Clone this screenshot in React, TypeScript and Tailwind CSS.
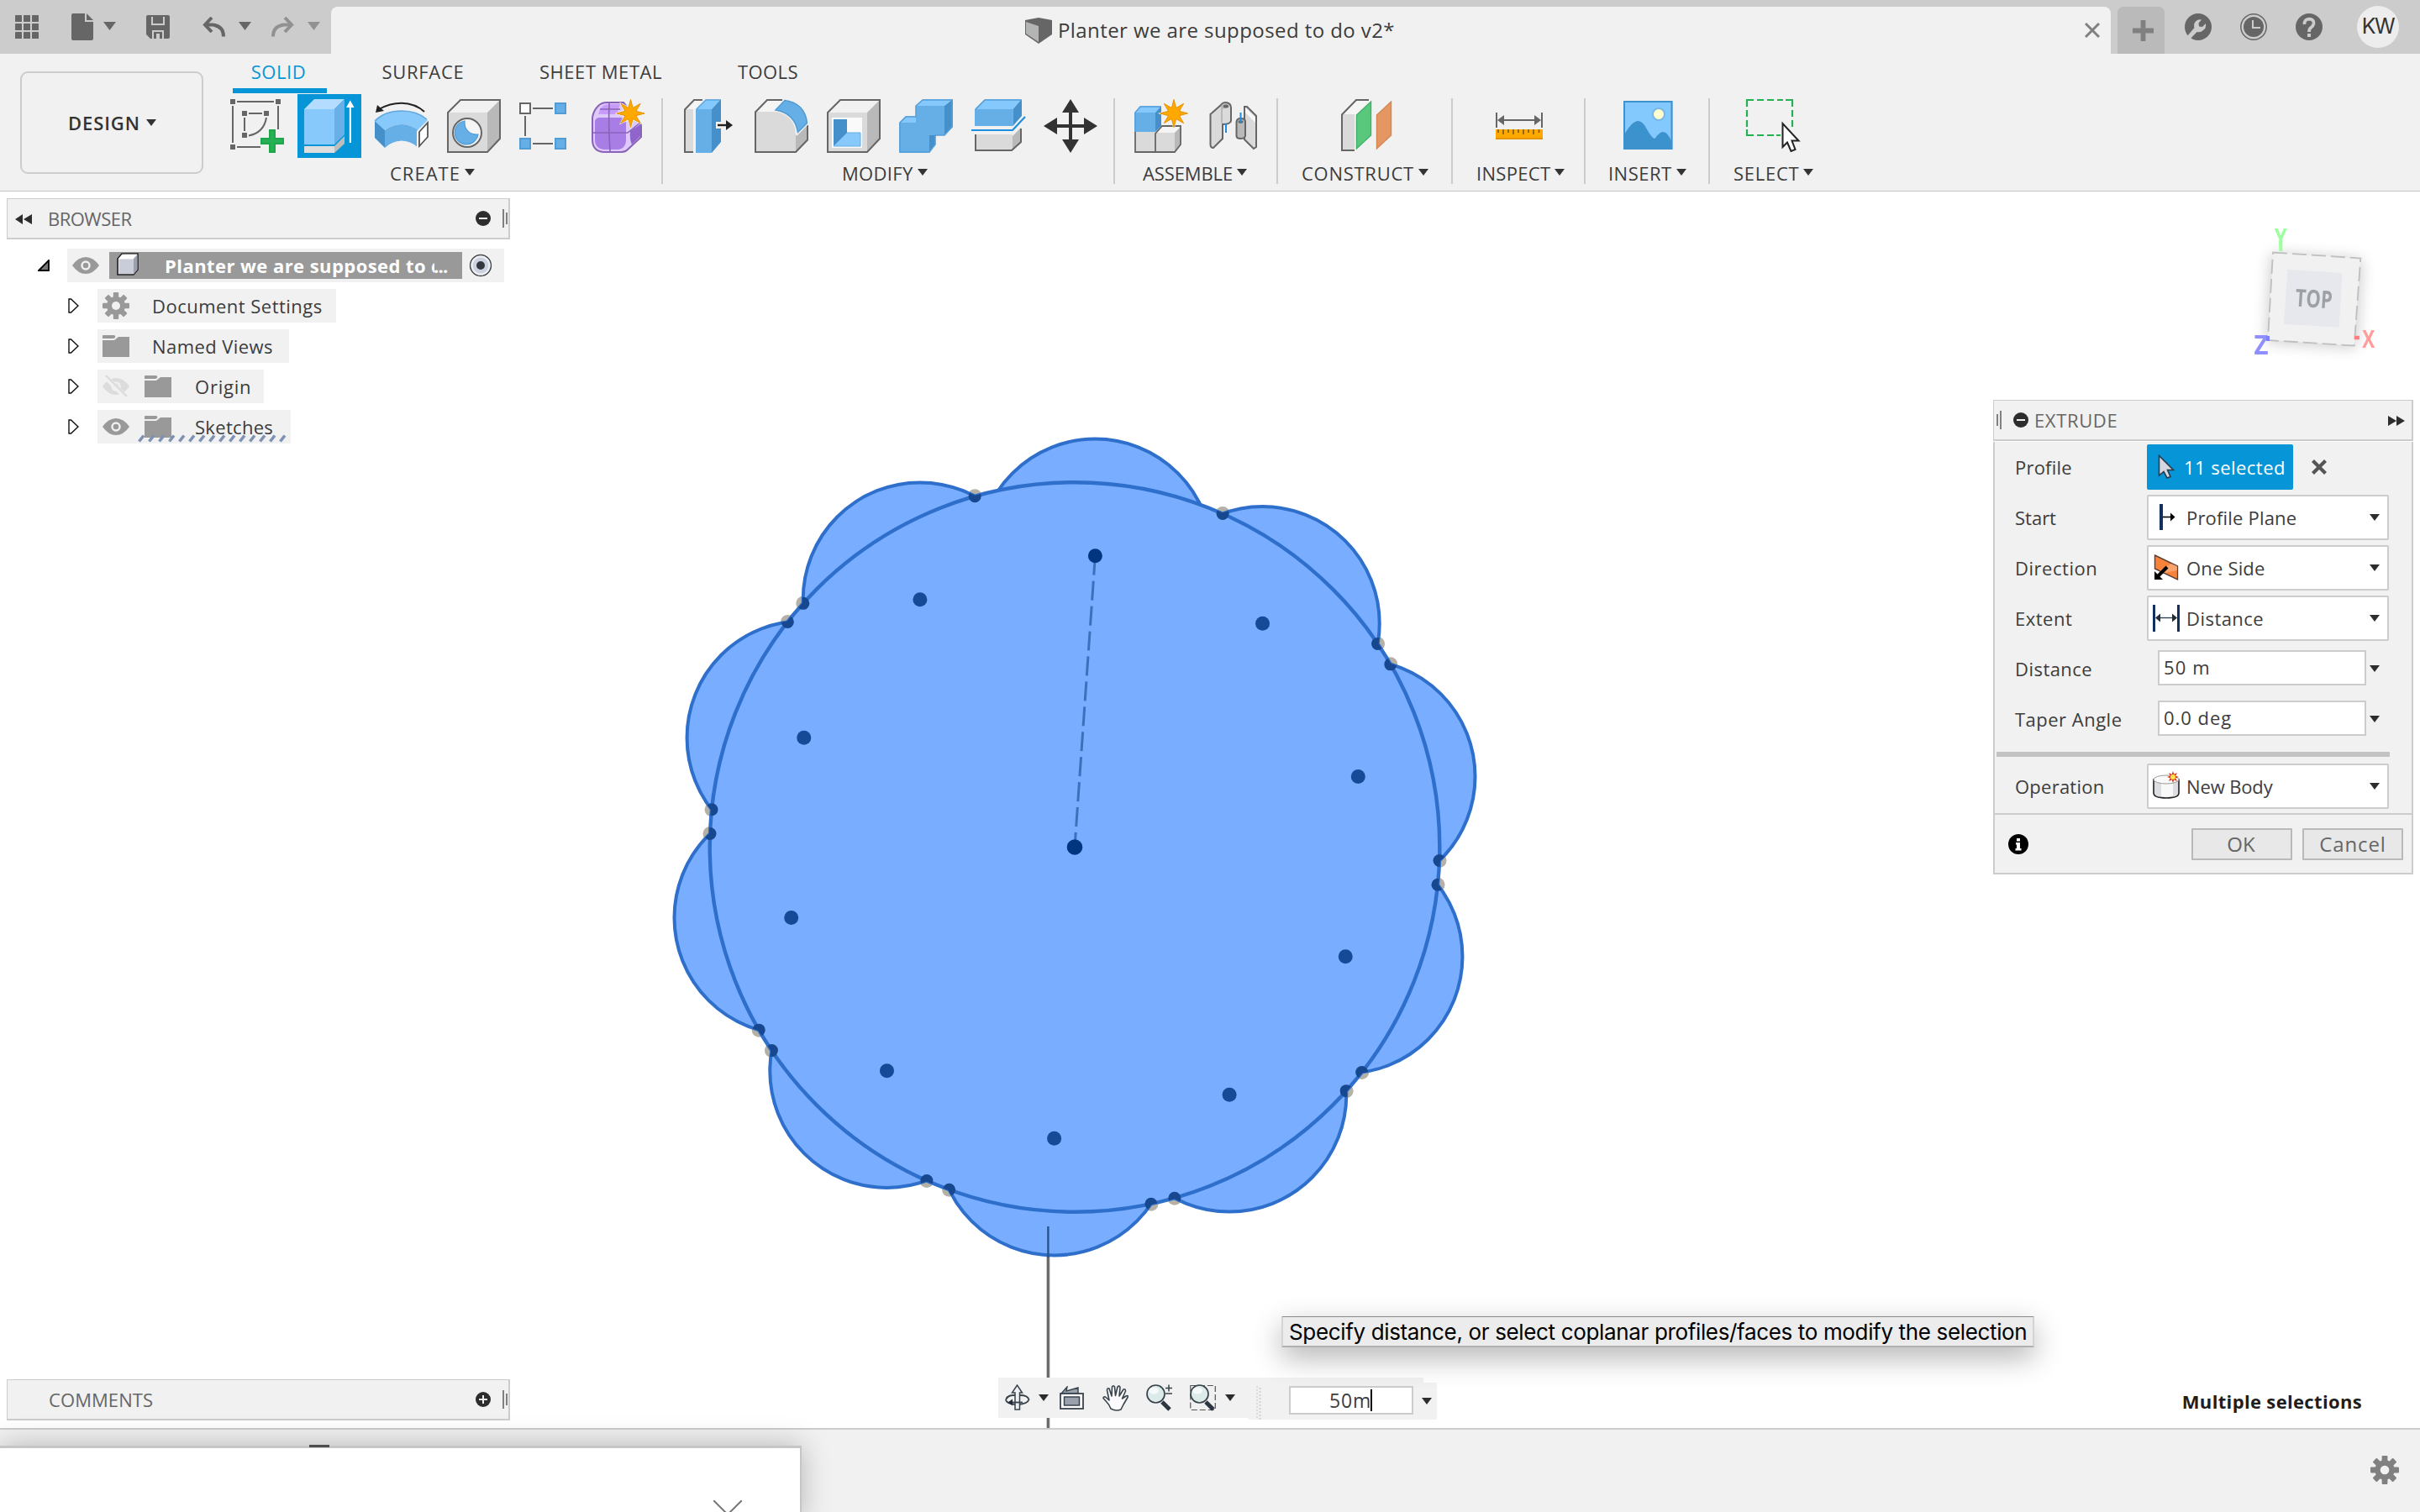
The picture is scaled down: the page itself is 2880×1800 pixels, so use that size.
import React from 'react';

type Kids = { children?: React.ReactNode };

function Caret({ className = 'w-3 h-2 text-[#333]' }: { className?: string }) {
  return (
    <svg viewBox="0 0 12 8" preserveAspectRatio="none" className={`shrink-0 ${className}`}>
      <path d="M0 0H12L6 8Z" fill="currentColor" />
    </svg>
  );
}

function Icon({ children }: Kids) {
  return (
    <svg viewBox="0 0 64 64" className="w-16 h-16 shrink-0 overflow-visible" strokeLinejoin="miter">
      {children}
    </svg>
  );
}

function starPoints(cx: number, cy: number, outer: number, inner: number, n: number) {
  return Array.from({ length: n * 2 }, (_, i) => {
    const r = i % 2 ? inner : outer;
    const a = (i * Math.PI) / n - Math.PI / 2;
    return `${(cx + r * Math.cos(a)).toFixed(2)},${(cy + r * Math.sin(a)).toFixed(2)}`;
  }).join(' ');
}

function Star({ cx, cy }: { cx: number; cy: number }) {
  return (
    <g>
      <polygon points={starPoints(cx, cy, 19, 9.5, 8)} fill="#f1f1f1" />
      <polygon points={starPoints(cx, cy, 16.5, 7, 8)} fill="#ffa800" stroke="#e59400" strokeWidth="1" />
    </g>
  );
}

/* ---------- Ribbon icons ---------- */

const SketchIcon = () => (
  <Icon>
    <g fill="#666">
      <rect x="0" y="0" width="6" height="6" /><rect x="54" y="0" width="6" height="6" />
      <rect x="14" y="14" width="6" height="6" /><rect x="40" y="14" width="6" height="6" />
      <rect x="14" y="40" width="6" height="6" /><rect x="0" y="54" width="6" height="6" />
    </g>
    <path d="M8 3H52M3 8V52M57 8V36M8 57H36M22 17H38M17 22V38M43 22Q40 40 22 43.5" fill="none" stroke="#666" strokeWidth="2" />
    <path d="M46 36H54V46H64V54H54V64H46V54H36V46H46Z" fill="#26b054" />
    <path d="M47 37H53V47H63V53H53V63H47V53H37V47H47Z" fill="none" stroke="#1ea34a" strokeWidth="1.6" />
  </Icon>
);

const ExtrudeIcon = () => (
  <div className="-mx-1.5 -my-1.5 w-[76px] h-[76px] bg-[#0696d7] shrink-0">
    <svg viewBox="0 0 76 76" className="w-full h-full">
      <path d="M8 62H44V70H8Z" fill="#dedede" />
      <path d="M44 62L56 50V59L44 70Z" fill="#bdbdbd" />
      <path d="M8 18H44V60H8Z" fill="#87c9fb" />
      <path d="M8 18L20 6H56L44 18Z" fill="#b3dcff" />
      <path d="M44 18L56 6V48L44 60Z" fill="#6ab0e8" />
      <path d="M62.8 58V16" stroke="#fff" strokeWidth="2" />
      <path d="M58 16L62.8 7.5L67.6 16Z" fill="#fff" />
    </svg>
  </div>
);

const RevolveIcon = () => (
  <Icon>
    <path d="M5 12Q18 4.700 32 4.700Q48 5 59 15" fill="none" stroke="#222" strokeWidth="2" />
    <path d="M1 16L3 7L11 14Z" fill="#222" />
    <path d="M0 26Q12 14 32 14Q52 14 64 26L52 37Q42 30 32 30Q22 30 12 37Z" fill="#87c9fb" />
    <path d="M12 37Q22 30 32 30Q42 30 52 37V58Q44 50 32 49.500Q20 50 12 58Z" fill="#65aee6" />
    <path d="M0 26L12 37V58L0 46Z" fill="#4590cb" />
    <path d="M0 26Q12 14 32 14Q50 14 62 24" fill="none" stroke="#5fa8e0" strokeWidth="1.500" />
    <path d="M50 38L64 24V47L50 60Z" fill="#f1f1f1" />
    <path d="M53 39L63 28V45L53 56Z" fill="#fff" stroke="#555" strokeWidth="1.800" />
  </Icon>
);

const GrayCube = () => (
  <g>
    <path d="M1 16L16 1H63L48 16Z" fill="#f1f1f1" />
    <path d="M1 16H48V63H1Z" fill="#dadada" />
    <path d="M48 16L63 1V47L48 63Z" fill="#b9b9b9" />
    <path d="M1 16L16 1H63V47L48 63H1Z" fill="none" stroke="#666" strokeWidth="2" />
  </g>
);

const HoleIcon = () => (
  <Icon>
    <GrayCube />
    <circle cx="24" cy="40" r="17" fill="#f5f5f5" stroke="#666" strokeWidth="2" />
    <path d="M21 26A14 14 0 1 0 37 42C27 43 20 36 21 26Z" fill="#65aee6" stroke="#4f9bd6" strokeWidth="1.200" />
  </Icon>
);

const PatternIcon = () => (
  <Icon>
    <path d="M16 11H40M7 20V44M16 53H40" stroke="#666" strokeWidth="2" />
    <rect x="1" y="5" width="12" height="12" fill="#fff" stroke="#666" strokeWidth="2" />
    <g fill="#65aee6" stroke="#529cd4" strokeWidth="2">
      <rect x="43" y="5" width="12" height="12" />
      <rect x="1" y="47" width="12" height="12" />
      <rect x="43" y="47" width="12" height="12" />
    </g>
  </Icon>
);

const FormIcon = () => (
  <Icon>
    <path d="M1 22Q2 14 8 8Q12 4 18 4H38L59 30V45L43 60Q40 63 36 63H14Q1 62 1 48Z" fill="#dec9fb" stroke="#8a63b8" strokeWidth="2" />
    <path d="M10 12Q14 6 20 6H34L30 18H8Z" fill="#c79bfa" />
    <path d="M4 26Q5 22 10 22H34Q40 22 41 28V50Q40 59 32 60H15Q4 59 4 48Z" fill="#a97de6" />
    <path d="M46 38L58 30V44L48 54Q45 48 46 38Z" fill="#8f65cc" />
    <path d="M21 5Q20 32 22 62M2 40H43L58 28M10 12H34" fill="none" stroke="#8a63b8" strokeWidth="1.600" />
    <Star cx={46.5} cy={17} />
  </Icon>
);

const PressPullIcon = () => (
  <Icon>
    <path d="M2 12L14 1H24L14 12V63H2Z" fill="#f5f5f5" />
    <path d="M3 12H13V62H3Z" fill="#dadada" />
    <path d="M24 1H14L3 12.500V63H13" fill="none" stroke="#666" strokeWidth="2" />
    <path d="M16 12H35V64H16Z" fill="#65aee6" />
    <path d="M16 12L28 0H46L35 12Z" fill="#85c8fb" />
    <path d="M35 12L46 0V51L35 64Z" fill="#4590cb" />
    <path d="M17 12L28 1H45" fill="none" stroke="#5fa8e0" strokeWidth="1.500" />
    <path d="M40 27H50V22L63 31L50 40V35H40Z" fill="#f1f1f1" />
    <path d="M42 31H53" stroke="#222" strokeWidth="2.400" />
    <path d="M52 25L60 31L52 37Z" fill="#222" />
  </Icon>
);

const FilletIcon = () => (
  <Icon>
    <path d="M1 15L15 1H36L24 15Z" fill="#f5f5f5" />
    <path d="M1 15H24Q48 18 49 43V63H1Z" fill="#dadada" />
    <path d="M49 43L63 30V48L49 63Z" fill="#b9b9b9" />
    <path d="M33 1H15L1 15.500V63H49L63 48.500V31" fill="none" stroke="#666" strokeWidth="2" />
    <path d="M22 14.500L35 0Q62 3 65 29L50 44Q48 17 22 14.500Z" fill="#f1f1f1" />
    <path d="M25 13L36 1.500Q60 5 62.500 28.500L51.500 39.500Q48 17 25 13Z" fill="#65aee6" stroke="#4f9bd6" strokeWidth="1.500" />
  </Icon>
);

const ShellIcon = () => (
  <Icon>
    <GrayCube />
    <path d="M6 22H42V58H6Z" fill="#fafafa" />
    <path d="M8 24H24V40L8 56Z" fill="#4590cb" />
    <path d="M24 40H40V56H8Z" fill="#87c9fb" stroke="#65aee6" strokeWidth="1" />
  </Icon>
);

const CombineIcon = () => (
  <Icon>
    <path d="M0 28H20V8H54V43H36V64H0Z" fill="#65aee6" />
    <path d="M0 28L8 20H20V28Z M20 8L28 0H64L54 8Z" fill="#85c8fb" />
    <path d="M54 8L64 0V33L54 43Z M36 43H43V54L36 64Z" fill="#4590cb" />
    <path d="M1 63V28L8 21H20V8L28 1H63V33L54 43H43V54L36 63Z" fill="none" stroke="#559fd8" strokeWidth="1.600" />
  </Icon>
);

const SplitIcon = () => (
  <Icon>
    <path d="M4 12H49.500V32H4Z" fill="#65aee6" />
    <path d="M4 12L16 0H60L49.500 12Z" fill="#85c8fb" />
    <path d="M49.500 12L60 0V20L49.500 32Z" fill="#4590cb" />
    <path d="M5 12L16 1H59" fill="none" stroke="#559fd8" strokeWidth="1.600" />
    <path d="M0 37H49L64 21" fill="none" stroke="#1c8ee0" strokeWidth="2.200" />
    <path d="M5 42H49V61H5Z" fill="#dadada" />
    <path d="M49 44L59 34V52L49 61Z" fill="#b9b9b9" />
    <path d="M5 42V61H48L59 51V35" fill="none" stroke="#666" strokeWidth="2" />
  </Icon>
);

const MoveIcon = () => (
  <Icon>
    <path d="M32 0L42 16H34V30H48V22L64 32L48 42V34H34V48H42L32 64L22 48H30V34H16V42L0 32L16 22V30H30V16H22Z" fill="#333" />
  </Icon>
);

const ComponentIcon = () => (
  <Icon>
    <path d="M1 39H25V63H1Z M25 40H48V63H25Z" fill="#dadada" />
    <path d="M25 40L32 32H56L48 40Z" fill="#f5f5f5" />
    <path d="M48 40L56 32V54L48 63Z" fill="#b9b9b9" />
    <path d="M1 39V63H48L55 54V32H33L25 41V63" fill="none" stroke="#666" strokeWidth="1.800" />
    <path d="M0 16H25V39H0Z" fill="#65aee6" />
    <path d="M0 16L7 8H32L25 16Z" fill="#85c8fb" />
    <path d="M25 16L32 8V32L25 39Z" fill="#4590cb" />
    <path d="M1 39V16L7 9H31" fill="none" stroke="#559fd8" strokeWidth="1.400" />
    <Star cx={47} cy={17} />
  </Icon>
);

const JointIcon = () => (
  <Icon>
    <path d="M4.500 18L17 7Q19 4 23 4Q29 5 29 10V26Q28 30 19 30V47L8 58Q4.500 58 4.500 54Z" fill="#dadada" stroke="#666" strokeWidth="2" />
    <path d="M17 28V8Q20 4 24 5V10L19 12V29Z" fill="#b9b9b9" />
    <ellipse cx="23" cy="8.500" rx="3.200" ry="2" fill="#666" />
    <path d="M23 29V40" stroke="#1c8ee0" strokeWidth="2" />
    <path d="M45 9L48 9L59 20V57L56 59L45 48Z" fill="#dadada" stroke="#666" strokeWidth="2" />
    <path d="M46 10L58 22V28L46 16Z" fill="#f8f8f8" />
    <path d="M35.500 27Q36 23 40.500 23Q46 23 46 27V44Q45 47 40.500 47Q36 47 35.500 44Z" fill="#b9b9b9" stroke="#666" strokeWidth="2" />
    <ellipse cx="40.500" cy="27" rx="3" ry="1.800" fill="#666" />
    <path d="M40.500 16V28" stroke="#1c8ee0" strokeWidth="2" />
  </Icon>
);

const ConstructIcon = () => (
  <Icon>
    <path d="M3 18L20 1H36L20 18Z" fill="#f5f5f5" />
    <path d="M3 18H18V61H3Z" fill="#dadada" />
    <path d="M35 1H20L3 18.500V61H18" fill="none" stroke="#666" strokeWidth="2" />
    <path d="M20.500 19L37.500 3V43L20.500 59Z" fill="#59c87d" stroke="#43b269" strokeWidth="1.400" />
    <path d="M44.500 19L61.500 3V43L44.500 59Z" fill="#e59763" stroke="#d58550" strokeWidth="1.400" />
  </Icon>
);

const MeasureIcon = () => (
  <Icon>
    <path d="M5 16V34M59 16V34M10 25H54" stroke="#666" strokeWidth="2" />
    <path d="M6 25L14 19V31ZM58 25L50 19V31Z" fill="#666" />
    <rect x="4" y="36" width="56" height="12" fill="#ffa800" />
    <path d="M4 47H60" stroke="#e59400" strokeWidth="2" />
    <path d="M7 36V40M13 36V42M19 36V40M25 36V42M31 36V40M37 36V42M43 36V40M49 36V42M55.500 36V40" stroke="#7a5a1c" strokeWidth="1.600" />
  </Icon>
);

const InsertIcon = () => (
  <Icon>
    <rect x="3" y="2" width="58.500" height="58" fill="#84c9fe" />
    <path d="M3 44Q13 26 20.500 26Q26 26 31 36Q38 48 40.500 47Q46 39 50 39Q56 39 61 52V60H3Z" fill="#3c92cd" />
    <rect x="4" y="3" width="56.500" height="56" fill="none" stroke="#3c92cd" strokeWidth="2" />
    <circle cx="45" cy="18" r="7" fill="#ffffcf" stroke="#78b8e2" strokeWidth="2" />
  </Icon>
);

const SelectIcon = () => (
  <Icon>
    <path d="M1 9V1H9M13 1H21M25 1H33M37 1H44M47 1H55V9M55 13V21M55 25V33M1 13V21M1 25V33M1 36V43H9M13 43H21M25 43H33M36 43H41" fill="none" stroke="#26b054" strokeWidth="2.200" />
    <path d="M43.500 29V57L49 51.500L53.500 62L58.500 60L54.500 49.500H62.500Z" fill="#fff" stroke="#222" strokeWidth="2" />
  </Icon>
);

/* ---------- Header ---------- */

const Grid9 = () => (
  <svg viewBox="0 0 28 28" className="w-7 h-7" fill="#666">
    {[0, 10, 20].map((y) => [0, 10, 20].map((x) => <rect key={`${x}-${y}`} x={x} y={y} width="8" height="8" rx="0.600" />))}
  </svg>
);

function Header() {
  return (
    <header className="flex h-16 shrink-0 bg-[#ccc]">
      <div className="flex w-[394px] items-center pl-[18px]">
        <Grid9 />
        <svg viewBox="0 0 26 32" className="ml-[39px] w-[26px] h-8" fill="#666">
          <path d="M2 0H16V10H26V30Q26 32 24 32H2Q0 32 0 30V2Q0 0 2 0Z M18 0L26 8H18Z" />
        </svg>
        <Caret className="ml-3 w-[15px] h-[10px] -mt-0.5 text-[#666]" />
        <svg viewBox="0 0 28 28" className="ml-9 w-7 h-7">
          <path d="M2 0H26Q28 0 28 2V26Q28 28 26 28H5L0 23V2Q0 0 2 0Z" fill="#666" />
          <path d="M7 2V11H21V2M8 28V19H20V28" fill="none" stroke="#ccc" strokeWidth="2" />
          <path d="M12 22H16V28H12Z" fill="#ccc" />
        </svg>
        <svg viewBox="0 0 27 24" className="ml-[39px] w-[27px] h-6" fill="none" stroke="#666" strokeWidth="4">
          <path d="M11 1L3 9.500L11 18" /><path d="M3 9.500H12Q25 11 25 23.500" />
        </svg>
        <Caret className="ml-4 w-[15px] h-[10px] -mt-0.5 text-[#666]" />
        <svg viewBox="0 0 27 24" className="ml-6 w-[27px] h-6" fill="none" stroke="#919191" strokeWidth="4">
          <path d="M16 1L24 9.500L16 18" /><path d="M24 9.500H15Q2 11 2 23.500" />
        </svg>
        <Caret className="ml-4 w-[15px] h-[10px] -mt-0.5 text-[#919191]" />
      </div>
      <div className="mt-2 flex w-[2118px] items-center rounded-t-[8px] bg-[#f1f1f1] pl-[826px]">
        <svg viewBox="0 0 32 32" className="w-8 h-8">
          <path d="M0 4L16 1L32 4V21L16 32L0 21Z" fill="#666" />
          <path d="M1 6L16 11V30L1 20Z" fill="#b3b5b4" />
        </svg>
        <span className="ml-[7px] -mt-px text-[24px] leading-[32px] tracking-[0.42px] whitespace-nowrap text-[#3c3c3c]">
          Planter we are supposed to do v2*
        </span>
        <svg viewBox="0 0 18 18" className="ml-auto mr-[13px] w-[18px] h-[18px]" stroke="#808080" strokeWidth="3">
          <path d="M1 1L17 17M17 1L1 17" />
        </svg>
      </div>
      <div className="ml-2 mt-2 flex w-14 items-center justify-center rounded-t-[7px] bg-[#bababa]">
        <svg viewBox="0 0 26 26" className="ml-1 w-[25px] h-[25px]" stroke="#808080" strokeWidth="6">
          <path d="M0 13H26M13 0V26" />
        </svg>
      </div>
      <div className="flex flex-1 items-center pl-6">
        <svg viewBox="0 0 32 32" className="w-8 h-8">
          <circle cx="16" cy="16" r="16" fill="#666" />
          <path d="M3 27L11.500 17Q10 12 13.500 9Q16 6.500 20 7.500L16.500 11.500L17 15.500L21 16L25 12Q26 17 22 20Q19 23 14.500 22L6 31Z" fill="#ccc" />
        </svg>
        <svg viewBox="0 0 32 32" className="ml-[34px] w-8 h-8">
          <circle cx="16" cy="16" r="15.200" fill="none" stroke="#666" strokeWidth="1.500" />
          <circle cx="16" cy="16" r="12" fill="#666" />
          <path d="M15 8V17H24" fill="none" stroke="#ccc" strokeWidth="2" />
        </svg>
        <svg viewBox="0 0 32 32" className="ml-[34px] w-8 h-8">
          <circle cx="16" cy="16" r="16" fill="#666" />
          <path d="M10.500 13Q10 7 16 6.700Q22 7 21.500 12Q21 15 18 17Q16 18.500 16 22" fill="none" stroke="#ccc" strokeWidth="3.800" />
          <rect x="14" y="24" width="4" height="4" fill="#ccc" />
        </svg>
        <div className="ml-[41px] flex h-[50px] w-[50px] items-center justify-center rounded-full bg-[#ededed] font-['Inter',sans-serif] text-[25px] tracking-[-1.4px] text-[#333]">
          KW
        </div>
      </div>
    </header>
  );
}

/* ---------- Ribbon ---------- */

function Group({ width, pad, label, labelPad, children }: { width: string; pad: string; label: React.ReactNode; labelPad: string } & Kids) {
  return (
    <section className={`h-[102px] shrink-0 ${width}`}>
      <div className={`flex gap-[22px] pt-px ${pad}`}>{children}</div>
      <div className={`mt-[13px] flex h-[22px] items-center text-[22px] leading-[22px] ${labelPad}`}>
        {label}
        <Caret className="ml-[5px] -mt-0.5 w-3 h-2 text-[#333]" />
      </div>
    </section>
  );
}

function Ribbon() {
  return (
    <div className="flex h-[164px] shrink-0 border-b border-[#c4c4c4] bg-[#f1f1f1] whitespace-nowrap">
      <div className="w-[242px] pl-6 pt-[21px]">
        <button className="flex h-[122px] w-[218px] items-center rounded-[9px] border-2 border-[#ccc] pl-[55px] pb-px text-[22px] leading-[24px] font-semibold tracking-[0.9px] text-[#333]">
          DESIGN
          <Caret className="ml-[7px] w-3 h-2 text-[#333]" />
        </button>
      </div>
      <div className="flex-1">
        <nav className="flex h-12 pl-[35px] text-[22px]">
          <div className="flex h-[47px] w-[112px] justify-center border-b-[6px] border-[#0696d7] pr-[3px] pt-[10px] leading-[22px] tracking-[0.55px] text-[#0696d7]">SOLID</div>
          <div className="ml-[43px] w-[143px] pt-[10px] text-center leading-[22px] tracking-[0.7px]">SURFACE</div>
          <div className="ml-[44px] w-[192px] pt-[10px] text-center leading-[22px] tracking-[0.54px]">SHEET METAL</div>
          <div className="ml-[43px] w-[120px] pt-[10px] text-center leading-[22px] tracking-[0.42px]">TOOLS</div>
        </nav>
        <div className="flex pt-[5px]">
          <Group width="w-[547px] border-r-2 border-[#ccc]" pad="pl-8" labelPad="pl-[222px]" label={<span className="tracking-[1px]">CREATE</span>}>
            <SketchIcon /><ExtrudeIcon /><RevolveIcon /><HoleIcon /><PatternIcon /><FormIcon />
          </Group>
          <Group width="w-[538px] border-r-2 border-[#ccc]" pad="pl-[23px]" labelPad="pl-[213px]" label={<span className="tracking-[0.33px]">MODIFY</span>}>
            <PressPullIcon /><FilletIcon /><ShellIcon /><CombineIcon /><SplitIcon /><MoveIcon />
          </Group>
          <Group width="w-[194px] border-r-2 border-[#ccc]" pad="pl-[23px]" labelPad="pl-[33px]" label={<span className="tracking-[-0.11px]">ASSEMBLE</span>}>
            <ComponentIcon /><JointIcon />
          </Group>
          <Group width="w-[208px] border-r-2 border-[#ccc]" pad="pl-[73px]" labelPad="pl-[28px]" label={<span className="tracking-[0.73px]">CONSTRUCT</span>}>
            <ConstructIcon />
          </Group>
          <Group width="w-[158px] border-r-2 border-[#ccc]" pad="pl-[47px]" labelPad="pl-[28px]" label={<span className="tracking-[0.32px]">INSPECT</span>}>
            <MeasureIcon />
          </Group>
          <Group width="w-[148px] border-r-2 border-[#ccc]" pad="pl-[42px]" labelPad="pl-[27px]" label={<span className="tracking-[0.48px]">INSERT</span>}>
            <InsertIcon />
          </Group>
          <Group width="w-[160px]" pad="pl-[43px]" labelPad="pl-[28px]" label={<span className="tracking-[0.73px]">SELECT</span>}>
            <SelectIcon />
          </Group>
        </div>
      </div>
    </div>
  );
}

/* ---------- Sketch on the canvas ---------- */

const CX = 1279;
const CY = 1008.5;
const R = 434.3;
const PETAL_DIST = 347.6;
const PETAL_R = 139.2;
const HALF_SPAN = 16.1;
const BASE = 4.02;

const polar = (deg: number, r: number) => {
  const a = (deg * Math.PI) / 180;
  return { x: CX + r * Math.sin(a), y: CY - r * Math.cos(a) };
};
const petals = Array.from({ length: 10 }, (_, i) => BASE + i * 36);
const joints = petals.slice(1).flatMap((a) => [polar(a - HALF_SPAN, R), polar(a + HALF_SPAN, R)]);

function Viewport() {
  const top = polar(BASE, PETAL_DIST);
  return (
    <svg viewBox="0 228 2880 1472" className="absolute inset-0 h-[1472px] w-[2880px]">
      <defs>
        <filter id="cubeShadow" x="-40%" y="-40%" width="180%" height="180%"><feGaussianBlur stdDeviation="9" /></filter>
        <filter id="soft" x="-20%" y="-20%" width="140%" height="140%"><feGaussianBlur stdDeviation="0.7" /></filter>
        <clipPath id="shape">
          <circle cx={CX} cy={CY} r={R + 1} />
          {petals.map((a) => { const p = polar(a, PETAL_DIST); return <circle key={a} cx={p.x} cy={p.y} r={PETAL_R + 1} />; })}
        </clipPath>
      </defs>
      <path d="M1247.400 1490V1700" stroke="#c4c4c4" strokeWidth="4.600" />
      <path d="M1247.400 1490V1700" stroke="#636363" strokeWidth="2.600" />
      <g filter="url(#soft)">
        {joints.map((p, i) => <circle key={i} cx={p.x} cy={p.y} r="8.500" fill="#b5b1a6" />)}
      </g>
      {petals.map((a) => {
        const p = polar(a, PETAL_DIST);
        return <circle key={a} cx={p.x} cy={p.y} r={PETAL_R} fill="#79adff" stroke="#2e6fcb" strokeWidth="4" />;
      })}
      <circle cx={CX} cy={CY} r={R} fill="#79adff" stroke="#2e6fcb" strokeWidth="4.400" />
      <path d="M1247.400 1460V1497" stroke="#27528f" strokeWidth="2.400" />
      <path d={`M${top.x} ${top.y}L${CX} ${CY}`} stroke="#3d70bb" strokeWidth="3" strokeDasharray="23 7" />
      <g clipPath="url(#shape)" fill="#17488f">
        {joints.map((p, i) => <circle key={i} cx={p.x} cy={p.y} r="7.500" />)}
      </g>
      <g fill="#164a97">
        {petals.slice(1).map((a) => { const p = polar(a, PETAL_DIST); return <circle key={a} cx={p.x} cy={p.y} r="8.500" />; })}
      </g>
      <circle cx={top.x} cy={top.y} r="8.500" fill="#00357f" />
      <circle cx={CX} cy={CY} r="9.300" fill="#00357f" />

      {/* view cube */}
      <path d="M2703 302L2811 309L2804 414L2697 407Z" fill="#000" opacity="0.2" filter="url(#cubeShadow)" />
      <g filter="url(#soft)">
        <path d="M2705 300.500L2809.300 307.500L2801.700 411.500L2699 405Z" fill="#f1f1f1" stroke="#bfbfbf" strokeWidth="1.800" strokeDasharray="17 6" />
        <path d="M2722.300 320.700L2787.300 325L2783.700 389.700L2718 385.700Z" fill="#e6e8ed" />
        <g fontFamily="Open Sans, sans-serif">
          <text x="2753.700" y="366" textAnchor="middle" fontSize="29" fontWeight="700" fill="#9da1a7" textLength="44" lengthAdjust="spacingAndGlyphs" transform="rotate(4 2753.700 355.700)">TOP</text>
          <text x="2714.300" y="293" textAnchor="middle" fontSize="29" fontWeight="700" fill="#9dff9d" textLength="15" lengthAdjust="spacingAndGlyphs">Y</text>
          <text x="2818.700" y="413.500" textAnchor="middle" fontSize="29" fontWeight="700" fill="#ff9c9c" textLength="15" lengthAdjust="spacingAndGlyphs">X</text>
          <text x="2691" y="421.500" textAnchor="middle" fontSize="32" fontWeight="700" fill="#8f8fff" textLength="17" lengthAdjust="spacingAndGlyphs">Z</text>
        </g>
        <path d="M2714.300 286V299" stroke="#9dff9d" strokeWidth="4" />
        <path d="M2802 402H2808" stroke="#ff8080" strokeWidth="4.500" />
        <path d="M2699 400V406" stroke="#8080ff" strokeWidth="4" />
      </g>
    </svg>
  );
}

/* ---------- Browser ---------- */

const Eye = ({ hidden = false }: { hidden?: boolean }) => (
  <svg viewBox="0 0 32 28" className="h-7 w-8 shrink-0">
    <path d="M0 14Q7 4 16 4Q25 4 32 14Q25 24 16 24Q7 24 0 14Z" fill={hidden ? '#dcdcdc' : '#999'} />
    <circle cx="16" cy="14" r="4.500" fill={hidden ? '#dcdcdc' : 'none'} stroke="#f1f1f1" strokeWidth="2.400" />
    {hidden && <path d="M3 2L28 27" stroke="#f1f1f1" strokeWidth="6" />}
    {hidden && <path d="M4 1L29 26" stroke="#dcdcdc" strokeWidth="2.400" />}
  </svg>
);

const Folder = () => (
  <svg viewBox="0 0 32 26" className="h-[26px] w-8 shrink-0" fill="#999">
    <path d="M0 1Q0 0 1 0H14Q16 1 15 3L13 4H0Z M0 6H14L19 2H32V26H0Z" />
  </svg>
);

const Gear = ({ className }: { className: string }) => (
  <svg viewBox="0 0 32 32" className={`shrink-0 ${className}`}>
    <g fill="currentColor">
      {[0, 45, 90, 135].map((a) => <rect key={a} x="12.800" y="0" width="6.400" height="32" rx="1" transform={`rotate(${a} 16 16)`} />)}
      <circle cx="16" cy="16" r="11" />
    </g>
    <circle cx="16" cy="16" r="5" fill="#f1f1f1" />
  </svg>
);

const Expander = () => (
  <svg viewBox="0 0 13 18" className="h-[18px] w-[13px] shrink-0">
    <path d="M1 1H3.500L12 9L3.500 17H1Z" fill="#fff" stroke="#111" strokeWidth="1.400" />
  </svg>
);

function TreeRow({ width, children }: { width: string } & Kids) {
  return (
    <div className="flex h-12 items-center pl-[81px]">
      <Expander />
      <div className={`relative ml-[22px] flex h-10 items-center bg-[#f1f1f1] pl-1.5 text-[22px] leading-[24px] ${width}`}>{children}</div>
    </div>
  );
}

const RoundButton = ({ plus = false, className }: { plus?: boolean; className: string }) => (
  <svg viewBox="0 0 18 18" className={`h-[18px] w-[18px] shrink-0 ${className}`}>
    <circle cx="9" cy="9" r="9" fill="#2d2d2d" />
    <path d={plus ? 'M4 9H14M9 4V14' : 'M4 9H14'} stroke="#f1f1f1" strokeWidth="2" />
  </svg>
);

const Grip = () => (
  <div className="flex items-center gap-[2px]">
    <div className="h-[22px] w-[2px] bg-[#808080]" />
    <div className="h-[14px] w-[2px] bg-[#808080]" />
  </div>
);

function Browser() {
  return (
    <div className="pt-2">
      <div className="ml-2 flex h-[49px] w-[599px] items-center border border-r-2 border-b-2 border-[#ccc] bg-[#f1f1f1]">
        <svg viewBox="0 0 20 12" className="ml-[9px] mt-0.5 h-3 w-5" fill="#2d2d2d"><path d="M0 6L9 0V12ZM10 6L20 0V12Z" /></svg>
        <span className="ml-[19px] text-[22px] leading-[24px] tracking-[-0.52px] text-[#666]">BROWSER</span>
        <RoundButton className="ml-auto mr-[14px]" />
        <div className="mr-px"><Grip /></div>
      </div>
      <div className="mt-[11px] flex h-10 items-center pl-[45px]">
        <svg viewBox="0 0 14 14" className="h-[14px] w-[14px]"><path d="M13 1V13H1Z" fill="#777" stroke="#000" strokeWidth="1.800" /></svg>
        <div className="ml-[21px] flex h-10 w-[520px] items-center bg-[#f1f1f1] pl-1.5">
          <Eye />
          <div className="ml-3 flex h-8 w-[420px] items-center bg-[#999] pl-[9px]">
            <svg viewBox="0 0 26 27" className="-mt-1 h-[27px] w-[26px]">
              <path d="M1 26V7L6 1H25V20L20 26Z" fill="#dfe2ea" stroke="#222" strokeWidth="1.600" />
              <path d="M2 7H20L24.500 1.800H6.500Z" fill="#fff" />
              <path d="M20 7L24.500 2V20L20 25.500Z" fill="#9ba0ac" />
              <path d="M3 8H20V25H3Z" fill="#c9cdd9" />
            </svg>
            <div className="ml-[31px] flex text-[22px] leading-[24px] font-bold tracking-[0.44px] whitespace-nowrap text-white">
              <span className="w-[317px]">Planter we are supposed to</span>
              <span className="w-[4px] overflow-hidden">d</span>
              <span className="-ml-px tracking-[-0.8px]">...</span>
            </div>
          </div>
          <svg viewBox="0 0 28 28" className="ml-2 h-7 w-7">
            <circle cx="14" cy="14" r="12.400" fill="#ccd2e0" stroke="#444" strokeWidth="1.500" />
            <circle cx="14" cy="14" r="10.500" fill="none" stroke="#eef0f6" strokeWidth="2" />
            <circle cx="14" cy="14" r="5" fill="#333840" />
          </svg>
        </div>
      </div>
      <div className="mt-1">
        <TreeRow width="w-[284px]">
          <Gear className="h-8 w-8 text-[#999]" />
          <span className="ml-[27px] tracking-[0.48px] whitespace-nowrap">Document Settings</span>
        </TreeRow>
        <TreeRow width="w-[228px]">
          <Folder />
          <span className="ml-[27px] tracking-[0.42px] whitespace-nowrap">Named Views</span>
        </TreeRow>
        <TreeRow width="w-[198px]">
          <Eye hidden />
          <div className="ml-[18px]"><Folder /></div>
          <span className="ml-[28px] tracking-[0.77px]">Origin</span>
        </TreeRow>
        <TreeRow width="w-[230px]">
          <Eye />
          <div className="ml-[18px]"><Folder /></div>
          <span className="ml-[28px] tracking-[0.31px]">Sketches</span>
          <svg viewBox="0 0 178 10" className="absolute left-[48px] top-[29px] h-[10px] w-[178px]">
            {Array.from({ length: 15 }, (_, i) => (
              <path key={i} d={`M${i * 12 + 1.5} 8.500L${i * 12 + 7} 1.500`} stroke="#7d91b3" strokeWidth="3.600" />
            ))}
          </svg>
        </TreeRow>
      </div>
    </div>
  );
}

/* ---------- Extrude dialog ---------- */

function Row({ label, children }: { label: React.ReactNode } & Kids) {
  return (
    <div className="flex h-[60px] items-center pl-6">
      <div className="w-[157px] shrink-0 whitespace-nowrap">{label}</div>
      {children}
    </div>
  );
}

function Select({ icon, children }: { icon: React.ReactNode } & Kids) {
  return (
    <div className="flex h-[54px] w-[288px] items-center rounded-[2px] border-2 border-[#ccc] bg-white pl-[3px] pr-[9px] whitespace-nowrap">
      <svg viewBox="0 0 36 36" className="h-9 w-9 shrink-0">{icon}</svg>
      <div className="ml-[6px]">{children}</div>
      <Caret className="ml-auto w-3 h-2 text-[#2d2d2d]" />
    </div>
  );
}

function ValueInput({ children }: Kids) {
  return (
    <div className="flex items-center">
      <div className="ml-[13px] -mt-0.5 h-[42px] w-[248px] border-2 border-[#ccc] bg-white pl-[5px] leading-[37px] whitespace-nowrap">{children}</div>
      <Caret className="ml-1 w-3 h-2 text-[#2d2d2d]" />
    </div>
  );
}

function ExtrudeDialog() {
  return (
    <div className="mr-2 mt-[248px] w-[500px] text-[22px] leading-[24px]">
      <div className="flex h-[49px] items-center border border-r-2 border-b-2 border-[#ccc] bg-[#f1f1f1]">
        <div className="ml-[3px] rotate-180"><Grip /></div>
        <RoundButton className="ml-[14px]" />
        <span className="ml-[7px] tracking-[0.63px] text-[#666]">EXTRUDE</span>
        <svg viewBox="0 0 20 12" className="ml-auto mr-[8px] mt-0.5 h-3 w-5" fill="#2d2d2d"><path d="M0 0L10 6L0 12ZM10 0L20 6L10 12Z" /></svg>
      </div>
      <div className="mt-px border-x-2 border-[#ccc] bg-[#f1f1f1]">
        <Row label={<span className="tracking-[0.22px]">Profile</span>}>
          <div className="flex h-[54px] w-[174px] items-center rounded-[2px] bg-[#0696d7] pl-[13px] whitespace-nowrap text-white">
            <svg viewBox="0 0 20 30" className="h-[30px] w-5 shrink-0">
              <path d="M1.500 1.500V25L7 20.500L11 28L15 26.500L11.500 18.500H18.500Z" fill="#d5d8e0" stroke="#2b3a4a" strokeWidth="1.600" />
            </svg>
            <span className="ml-[11px] tracking-[0.46px]">11 selected</span>
          </div>
          <svg viewBox="0 0 18 18" className="ml-[22px] h-[18px] w-[18px]" stroke="#555" strokeWidth="4.200"><path d="M1.500 1.500L16.500 16.500M16.500 1.500L1.500 16.500" /></svg>
        </Row>
        <Row label="Start">
          <Select icon={<g><rect x="10" y="2" width="4" height="31" fill="#12305e" /><path d="M14 17.500H25" stroke="#000" strokeWidth="1.600" /><path d="M23 12.500L28.500 17.500L23 22.500Z" /></g>}>
            <span className="tracking-[0.18px]">Profile Plane</span>
          </Select>
        </Row>
        <Row label={<span className="tracking-[0.53px]">Direction</span>}>
          <Select icon={<g>
            <path d="M4.500 3L31.500 16V32L4.500 19Z" fill="#f9823b" stroke="#5b4032" strokeWidth="1.400" />
            <path d="M24 13L31 16V21L16 24L10 21Z" fill="#fbb98e" opacity="0.6" />
            <path d="M19 17L8 28" stroke="#000" strokeWidth="4" /><path d="M4 22V32H14Z" />
          </g>}>
            <span className="tracking-[0.18px]">One Side</span>
          </Select>
        </Row>
        <Row label={<span className="tracking-[0.51px]">Extent</span>}>
          <Select icon={<g>
            <rect x="2" y="2" width="3" height="32" fill="#12305e" /><rect x="31" y="2" width="3" height="32" fill="#12305e" />
            <path d="M8 17.500H28" stroke="#2b3a4a" strokeWidth="1.300" /><path d="M5 17.500L11 12.500V22.500ZM31 17.500L25 12.500V22.500Z" fill="#222d38" />
          </g>}>
            <span className="tracking-[0.46px]">Distance</span>
          </Select>
        </Row>
        <Row label={<span className="tracking-[0.46px]">Distance</span>}>
          <ValueInput><span className="tracking-[1.14px]">50 m</span></ValueInput>
        </Row>
        <Row label={<span className="tracking-[0.49px]">Taper Angle</span>}>
          <ValueInput><span className="tracking-[0.97px]">0.0 deg</span></ValueInput>
        </Row>
        <div className="ml-0.5 mt-[9px] h-1.5 w-[468px] bg-[#c3c3c3]" />
        <div className="mt-[5px]">
          <Row label={<span className="tracking-[0.24px]">Operation</span>}>
            <Select icon={<g>
              <path d="M3 10V26Q3 32 18 32Q33 32 33 26V10Z" fill="#dcdee2" stroke="#222" strokeWidth="1.600" />
              <path d="M12 14V30Q20 32 26 29V14Z" fill="#f8f8f8" />
              <ellipse cx="18" cy="10" rx="15" ry="5" fill="#fafafa" stroke="#999" strokeWidth="1" />
              <polygon points={starPoints(26, 7, 7, 3.5, 8)} fill="#e0341a" /><circle cx="26" cy="7" r="3" fill="#ffe34d" />
            </g>}>
              <span className="tracking-[-0.13px]">New Body</span>
            </Select>
          </Row>
        </div>
        <div className="h-0.5" />
      </div>
      <div className="flex h-[73px] items-center border-2 border-[#ccc] bg-[#f1f1f1] pl-4 pr-[10px] text-[24px] text-[#666]">
        <svg viewBox="0 0 24 24" className="h-6 w-6">
          <circle cx="12" cy="12" r="12" />
          <path d="M10 5H14V8.500H10ZM9 10H14V17H15.500V19.500H8.500V17H10V12.500H9Z" fill="#fff" />
        </svg>
        <button className="ml-auto h-[38px] w-[120px] rounded-[1px] border-2 border-[#b9b9b9] bg-[#e8e8e8] pr-0.5 leading-[34px]">OK</button>
        <button className="ml-3 h-[38px] w-[120px] rounded-[1px] border-2 border-[#b9b9b9] bg-[#e8e8e8] leading-[34px] tracking-[0.9px]">Cancel</button>
      </div>
    </div>
  );
}

/* ---------- Navigation bar ---------- */

const Lens = ({ x }: { x: number }) => (
  <g>
    <path d={`M${x + 19} 21L${x + 28} 30`} stroke="#2d3640" strokeWidth="5" />
    <circle cx={x + 11.500} cy="11.500" r="10.500" fill="#dcebea" stroke="#39434c" strokeWidth="1.700" />
    <ellipse cx={x + 9} cy="7.500" rx="6" ry="4" fill="#fff" opacity="0.7" />
  </g>
);

function NavBar() {
  return (
    <div className="relative mb-[10px] flex h-[50px]">
      <div className="flex h-12 w-[298px] items-center bg-[#f1f1f1] pl-2">
        <svg viewBox="0 0 30 32" className="h-8 w-[30px] shrink-0">
          <path d="M3 15Q0 18 2 20.500Q6 24 15 24Q27 23.500 28.500 18Q27 13 18 13H10Q4 13 2 17" fill="none" stroke="#39434c" strokeWidth="1.800" />
          <path d="M12 10H8.500L14.500 1L20.500 10H17.500V30H12Z" fill="#eef0f4" stroke="#39434c" strokeWidth="1.500" />
          <path d="M5 21.500H21" stroke="#39434c" strokeWidth="1.800" /><path d="M3.500 21.500L9 17.500V25.500Z" fill="#222d38" />
        </svg>
        <Caret className="ml-[10px] w-3 h-2 text-[#2d2d2d]" />
        <svg viewBox="0 0 30 28" className="ml-[13px] h-7 w-[30px] shrink-0">
          <path d="M2 9L9 1L8 6L22 2V9Z" fill="#9aa1ac" stroke="#39434c" strokeWidth="1.400" />
          <rect x="1" y="9" width="27" height="18" fill="#fff" stroke="#39434c" strokeWidth="1.800" />
          <rect x="5.500" y="13" width="18" height="10" fill="#9aa1ac" stroke="#39434c" strokeWidth="1.500" />
        </svg>
        <svg viewBox="0 0 32 32" className="ml-[21px] h-8 w-8 shrink-0">
          <path d="M10 29Q8 24 5 21L1 16.500Q1 14.500 3.500 15L8 19L5.500 7Q5.500 4 8 5L11 14L11.500 3Q13 0.500 14.500 3L15.500 13.500L18 3Q20 1 21 3.500L20 14L25 6Q27.500 5 27.500 8L23.500 17L28 14Q31 12.500 30 15.500L25 24L22 30Q16 32.500 10 29Z" fill="#fbfbfd" stroke="#39434c" strokeWidth="1.600" strokeLinejoin="round" />
        </svg>
        <svg viewBox="0 0 32 32" className="ml-5 h-8 w-8 shrink-0">
          <Lens x={0} />
          <path d="M23 4.500H31M27 0.500V8.500M23 11H31" stroke="#39434c" strokeWidth="1.500" />
        </svg>
        <svg viewBox="0 0 32 32" className="ml-5 h-8 w-8 shrink-0">
          <rect x="0.800" y="1.500" width="29.500" height="29" fill="none" stroke="#555" strokeWidth="1.200" strokeDasharray="7 3" />
          <Lens x={0} />
        </svg>
        <Caret className="ml-[10px] w-3 h-2 text-[#2d2d2d]" />
      </div>
      <div className="h-1.5 w-[208px] bg-[#f1f1f1]" />
      <div className="absolute left-[298px] top-1.5 flex h-11 w-[224px] bg-[#f1f1f1]">
        <svg viewBox="0 0 8 40" className="ml-[8px] mt-1 h-10 w-2">
          {[0, 8, 16, 24, 32].map((y) => <path key={y} d={`M1 ${y + 1}h2M4 ${y + 3}h3M1 ${y + 5}h2M4 ${y + 7}h3`} stroke="#d4d4d4" strokeWidth="1.600" />)}
        </svg>
        <div className="ml-[32px] mt-1 flex h-[34px] w-[148px] items-center border-2 border-[#ccc] bg-white pl-[46px] text-[23px] leading-[24px] tracking-[0.9px] text-[#3c3c3c]">
          50m<span className="-ml-px h-[26px] w-0.5 bg-black" />
        </div>
        <Caret className="ml-[10px] mt-[18px] w-3 h-2 text-[#2d2d2d]" />
      </div>
    </div>
  );
}

export default function App() {
  return (
    <div className="relative flex h-[1800px] w-[2880px] flex-col overflow-hidden bg-white font-['Open_Sans','Noto_Sans',sans-serif] text-[#3c3c3c]">
      <Header />
      <Ribbon />
      <main className="relative flex h-[1472px] shrink-0 justify-between">
        <Viewport />
        <div className="relative flex w-[1188px] flex-col justify-between">
          <Browser />
          <div className="mb-[9px] ml-2 flex h-[49px] w-[599px] items-center border border-r-2 border-b-2 border-[#ccc] bg-[#f1f1f1]">
            <span className="ml-[49px] text-[22px] leading-[24px] tracking-[0.08px] text-[#666]">COMMENTS</span>
            <RoundButton plus className="ml-auto mr-[14px]" />
            <div className="mr-px"><Grip /></div>
          </div>
        </div>
        <div className="relative flex flex-1 items-end"><NavBar /></div>
        <div className="relative flex flex-col items-end justify-between">
          <ExtrudeDialog />
          <span className="mb-[20px] mr-[69px] text-[22px] leading-[24px] font-bold tracking-[0.34px] text-[#1e1e1e]">Multiple selections</span>
        </div>
        <div className="absolute left-[1525px] top-[1339px] h-[37px] w-[896px] border-2 border-t border-[#d4d4d4] border-t-[#8a8a8a] border-b-[#b0b0b0] bg-[#ececec] pl-[7px] font-['Inter',sans-serif] text-[26px] leading-[36px] tracking-[-0.35px] whitespace-nowrap text-black shadow-[0_12px_34px_rgba(0,0,0,0.3)]">
          Specify distance, or select coplanar profiles/faces to modify the selection
        </div>
      </main>
      <footer className="relative flex min-h-0 flex-1 items-start justify-between border-t-2 border-[#ccc] bg-[#f1f1f1]">
        <div className="relative mt-[19px] h-[90px] w-[954px] shrink-0 border-t-[3px] border-r-2 border-[#c6c6c6] bg-white shadow-[0_0_34px_rgba(0,0,0,0.25)]">
          <div className="absolute left-[368px] top-[-4px] h-[3px] w-6 bg-[#4d4d4d]" />
          <svg viewBox="0 0 34 34" className="ml-[849px] mt-[62px] h-[34px] w-[34px]" stroke="#777" strokeWidth="2"><path d="M0 0L34 34M34 0L0 34" /></svg>
        </div>
        <Gear className="mr-[25px] mt-[31px] h-[34px] w-[34px] text-[#808080]" />
      </footer>
    </div>
  );
}
